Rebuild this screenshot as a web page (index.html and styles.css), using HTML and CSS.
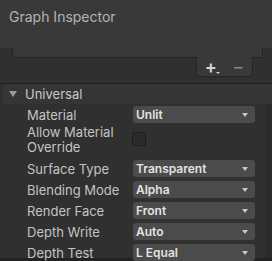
FILE: index.html
```html
<!DOCTYPE html>
<html lang="en">
<head>
  <meta charset="UTF-8">
  <title>Graph Inspector</title>
  <link rel="stylesheet" href="styles.css">
</head>
<body>

  <header class="title">Graph Inspector</header>

  <div class="list-wrap">
    <div class="list-box"></div>
    <div class="list-footer">
      <span class="add">+<i class="add-arrow"></i></span>
      <span class="remove">−</span>
    </div>
  </div>

  <section class="section">
    <div class="section-head">
      <i class="fold"></i>
      <span>Universal</span>
    </div>

    <div class="row">
      <span class="label">Material</span>
      <div class="dropdown">Unlit</div>
    </div>
    <div class="row row-tall">
      <span class="label">Allow Material<br>Override</span>
      <div class="check"></div>
    </div>
    <div class="row">
      <span class="label">Surface Type</span>
      <div class="dropdown">Transparent</div>
    </div>
    <div class="row">
      <span class="label">Blending Mode</span>
      <div class="dropdown">Alpha</div>
    </div>
    <div class="row">
      <span class="label">Render Face</span>
      <div class="dropdown">Front</div>
    </div>
    <div class="row">
      <span class="label">Depth Write</span>
      <div class="dropdown">Auto</div>
    </div>
    <div class="row">
      <span class="label">Depth Test</span>
      <div class="dropdown">L Equal</div>
    </div>
  </section>

</body>
</html>
```

FILE: styles.css
```css
body {
  font-family: 'Inter', 'Liberation Sans', sans-serif;
  font-size: 13px;
  margin: 0;
  background-color: #222;
  color: #c4c4c4;
  height: 261px;
  overflow: hidden;
}

.title {
  background-color: #393939;
  height: 48px;
  padding: 8px 0 0 9px;
  box-sizing: border-box;
  font-size: 14px;
  color: #b4b4b4;
}

.list-wrap {
  background-color: #303030;
  padding-bottom: 6px;
}

/* empty list area */
.list-box {
  margin: 0 9px 0 12px;
  height: 9px;
  background-color: #393939;
  border: 1px solid #242424;
  border-top: none;
}

.list-footer {
  width: 55px;
  height: 19px;
  margin: -1px 19px 0 auto;
  background-color: #393939;
  border: 1px solid #242424;
  border-top: none;
  border-radius: 0 0 3px 3px;
  display: flex;
  align-items: center;
  justify-content: space-around;
  font-size: 18px;
  line-height: 17px;
}

.add {
  position: relative;
  color: #d6d6d6;
  font-weight: 600;
}

.add-arrow {
  position: absolute;
  right: -3px;
  bottom: 1px;
  border-left: 2px solid transparent;
  border-right: 2px solid transparent;
  border-top: 2px solid #d2d2d2;
}

.remove {
  color: #8a8a8a;
}

.section {
  border-top: 1px solid #1f1f1f;
  height: 174px;
  background: linear-gradient(to right, #303030 265px, #2b2b2b 265px);
  border-radius: 0 0 0 3px;
}

.section-head {
  margin-left: 3px;
  height: 20px;
  background-color: #353535;
  display: flex;
  align-items: center;
  gap: 8px;
  padding-left: 6px;
  font-size: 13px;
  color: #c8c8c8;
}

.fold {
  border-left: 4px solid transparent;
  border-right: 4px solid transparent;
  border-top: 6px solid #9a9a9a;
}

.row {
  display: flex;
  align-items: center;
  height: 21px;
  padding-left: 27px;
}

.row-tall {
  height: 33px;
  align-items: flex-start;
}

.row-tall .label {
  line-height: 14.5px;
}

.label {
  width: 106px;
  flex-shrink: 0;
}

.dropdown {
  width: 122px;
  height: 17px;
  box-sizing: border-box;
  background-color: #4b4b4b;
  border-radius: 3px;
  padding: 0 0 0 3px;
  line-height: 17px;
  font-size: 12px;
  color: #e2e2e2;
  font-weight: 600;
  position: relative;
}

.dropdown::after {
  content: "";
  position: absolute;
  right: 7px;
  top: 7px;
  border-left: 3px solid transparent;
  border-right: 3px solid transparent;
  border-top: 4px solid #c8c8c8;
}

.check {
  margin: 7px 0 0 -1px;
  width: 14px;
  height: 14px;
  box-sizing: border-box;
  background-color: #2a2a2a;
  border: 1px solid #1e1e1e;
  border-radius: 2px;
}
```
